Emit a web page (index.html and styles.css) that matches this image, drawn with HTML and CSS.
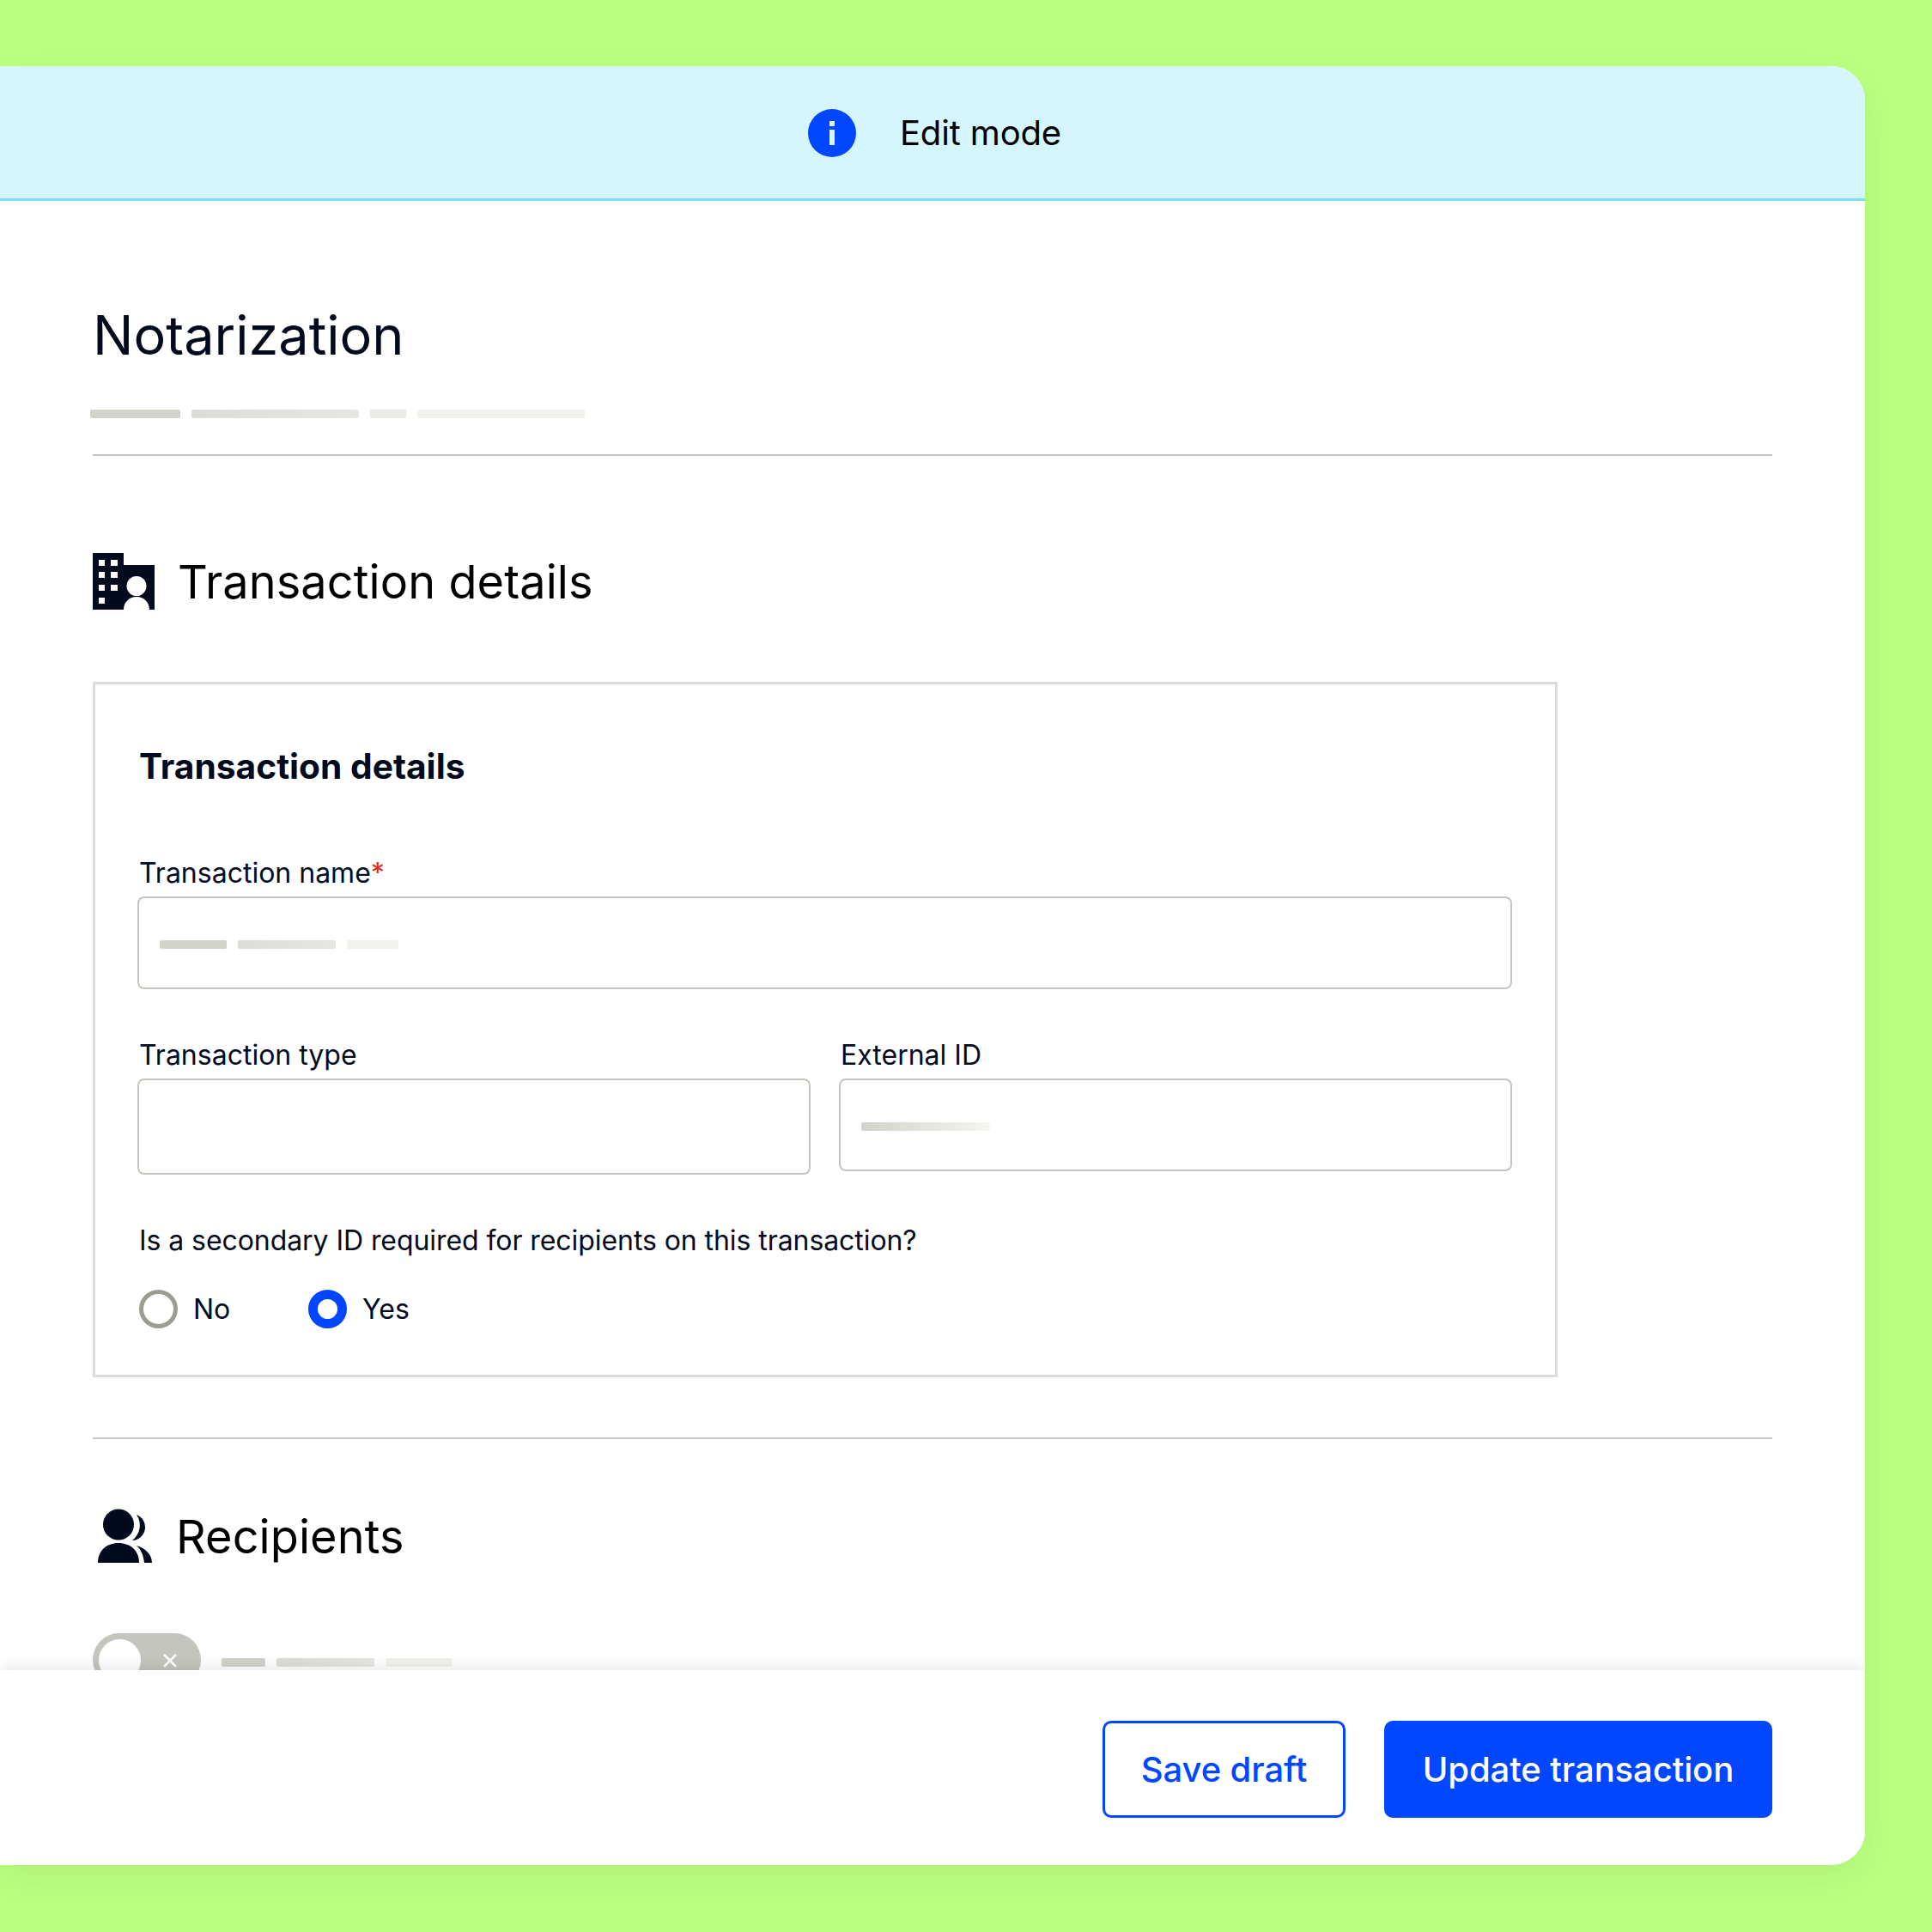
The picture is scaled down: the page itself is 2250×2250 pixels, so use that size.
FILE: index.html
```html
<!DOCTYPE html>
<html lang="en">
<head>
<meta charset="utf-8">
<title>Notarization</title>
<link rel="stylesheet" href="styles.css">
</head>
<body>
<main class="card">
  <div class="banner">
    <svg class="info" viewBox="0 0 56 56"><circle cx="28" cy="28" r="28" fill="#0047ff"/><rect x="25" y="14" width="6" height="6" fill="#d5f5ff"/><rect x="25" y="24" width="6" height="18" fill="#d5f5ff"/></svg>
    <span class="banner-text">Edit mode</span>
  </div>
  <div class="content">
    <h1 class="page-title">Notarization</h1>
    <div class="skel skel-title">
      <i class="s1" style="width:105px"></i><i class="s2" style="width:195px"></i><i class="s3" style="width:42px"></i><i class="s4" style="width:195px"></i>
    </div>
    <hr class="rule rule-top">
    <div class="section-head">
      <svg class="building" viewBox="0 0 72 66"><path fill="#020a1e" d="M0 0H36V14H72V66H66C66 57 59 51 51 51C43 51 36 57 36 66H0Z"/><g fill="#fff"><rect x="7" y="8" width="7" height="7"/><rect x="21" y="8" width="8" height="7"/><rect x="7" y="22" width="7" height="7"/><rect x="21" y="22" width="8" height="7"/><rect x="7" y="37" width="7" height="7"/><rect x="21" y="37" width="8" height="7"/><rect x="7" y="52" width="7" height="7"/><circle cx="51" cy="38.500" r="11.500"/></g></svg>
      <h2 class="section-title">Transaction details</h2>
    </div>
    <section class="box">
      <h3 class="box-title">Transaction details</h3>
      <label class="label label-name">Transaction name<span class="req">*</span></label>
      <div class="input">
        <div class="skel skel-field"><i class="s1" style="width:78px"></i><i class="s2" style="width:114px"></i><i class="s4" style="width:60px"></i></div>
      </div>
      <div class="row">
        <div class="col">
          <label class="label">Transaction type</label>
          <div class="input input-tall"></div>
        </div>
        <div class="col">
          <label class="label">External ID</label>
          <div class="input">
            <div class="skel skel-field"><i class="fade" style="width:150px"></i></div>
          </div>
        </div>
      </div>
      <p class="question">Is a secondary ID required for recipients on this transaction?</p>
      <div class="radios">
        <span class="radio-item radio-no"><span class="radio"></span>No</span>
        <span class="radio-item"><span class="radio radio-on"></span>Yes</span>
      </div>
    </section>
    <hr class="rule rule-mid">
    <div class="section-head section-head-2">
      <svg class="people" viewBox="0 0 64 64"><g fill="#020a1e"><circle cx="24" cy="18.500" r="18"/><path d="M0 63C0 49 10 40 24 40C38 40 48 49 48 63Z"/><path d="M45 7A15.500 15.500 0 0 1 40 37A22 22 0 0 0 45 7Z"/><path d="M45 43C55 46 63 53 63 63H54C53 55 51 48 45 43Z"/></g></svg>
      <h2 class="section-title">Recipients</h2>
    </div>
    <div class="toggle-row">
      <div class="toggle"><span class="knob"></span><svg class="toggle-x" viewBox="0 0 16 16"><path d="M1 1L15 15M15 1L1 15" stroke="#fff" stroke-width="2.500" fill="none"/></svg></div>
      <div class="skel skel-toggle"><i class="s1" style="width:51px"></i><i class="s2" style="width:114px"></i><i class="s4" style="width:78px"></i></div>
    </div>
  </div>
  <footer class="footer">
    <button class="btn btn-outline">Save draft</button>
    <button class="btn btn-solid">Update transaction</button>
  </footer>
</main>
</body>
</html>
```
FILE: styles.css
```css
* { box-sizing: border-box; }
html, body { margin: 0; padding: 0; }
body {
  width: 2250px;
  height: 2250px;
  background: #baff80;
  padding: 77px 78px 78px 0;
  font-family: Inter, "Liberation Sans", sans-serif;
  color: #020a1e;
  overflow: hidden;
}
.card {
  height: 2095px;
  background: #fff;
  border-radius: 0 40px 40px 0;
  box-shadow: 0 14px 40px rgba(0, 0, 0, 0.06);
  display: flex;
  flex-direction: column;
  overflow: hidden;
}
.banner {
  flex: none;
  height: 157px;
  background: #d5f5ff;
  border-bottom: 3px solid #7adfff;
  display: flex;
  align-items: center;
  justify-content: center;
  gap: 51px;
  padding: 2px 0 0 5px;
}
.info { width: 56px; height: 56px; flex: none; }
.banner-text { font-size: 40px; line-height: 48px; letter-spacing: -0.15px; color: #000; }
.content {
  flex: 1;
  min-height: 0;
  overflow: hidden;
  padding: 0 108px;
}
.page-title {
  margin: 0;
  padding: 118px 0 0 0;
  font-size: 63px;
  line-height: 76px;
  font-weight: 400;
}
.skel { display: flex; }
.skel i { display: block; height: 10px; border-radius: 2px; }
.s1 { background: #d2d3cd; }
.s2 { background: linear-gradient(90deg, #dcddd8, #e6e7e2); }
.s3 { background: #e9eae5; }
.s4 { background: #f1f2ed; }
.fade { background: linear-gradient(90deg, #d2d3cd, #f5f5f2); }
.skel-title { gap: 13px; margin: 49px 0 0 -3px; }
.rule { border: 0; height: 2px; background: #c4c5be; margin: 0; }
.rule-top { margin-top: 42px; }
.section-head { display: flex; align-items: center; gap: 27px; margin-top: 113px; }
.building { width: 72px; height: 66px; flex: none; margin-bottom: 1px; }
.section-title {
  margin: 0;
  font-size: 54px;
  line-height: 66px;
  font-weight: 400;
  letter-spacing: 0.1px;
  color: #000;
}
.box {
  width: 1706px;
  height: 810px;
  margin-top: 83px;
  border: 3px solid #dcdcd8;
  padding: 72px 50px 0 49px;
}
.box-title {
  margin: 0;
  padding-left: 2px;
  font-size: 40.700px;
  line-height: 48px;
  font-weight: 700;
}
.label {
  display: block;
  padding-left: 2px;
  font-size: 32px;
  line-height: 38px;
  height: 46px;
}
.label-name { margin-top: 81px; }
.req { color: #d92d20; }
.input {
  height: 108px;
  border: 2px solid #c4c5be;
  border-radius: 8px;
  display: flex;
  align-items: center;
  padding: 4px 24px 0;
}
.input-tall { height: 112px; }
.skel-field { gap: 13px; }
.row { display: flex; gap: 33px; margin-top: 58px; }
.col { flex: 1; min-width: 0; }
.question {
  margin: 58px 0 0;
  padding-left: 2px;
  font-size: 32px;
  line-height: 38px;
  letter-spacing: -0.07px;
}
.radios { display: flex; align-items: center; margin-top: 38px; padding-left: 2px; }
.radio-item { display: flex; align-items: center; gap: 18px; font-size: 32px; line-height: 45px; }
.radio-no { width: 197px; }
.radio { width: 45px; height: 45px; border-radius: 50%; border: 5px solid #9b9c94; display: block; flex: none; }
.radio-on { border: 11px solid #0047ff; }
.rule-mid { margin-top: 70px; background: #c9cac4; }
.section-head-2 { gap: 27px; margin-top: 81px; padding-left: 6px; }
.people { width: 64px; height: 64px; flex: none; margin-bottom: 2px; }
.toggle-row { display: flex; align-items: flex-start; gap: 24px; margin-top: 79px; }
.toggle {
  width: 126px;
  height: 62px;
  border-radius: 31px;
  background: #c4c5be;
  position: relative;
  flex: none;
}
.knob { position: absolute; left: 7px; top: 7px; width: 49px; height: 49px; border-radius: 50%; background: #fff; }
.toggle-x { position: absolute; left: 82px; top: 24px; width: 16px; height: 16px; }
.skel-toggle { gap: 13px; margin-top: 29px; }
.footer {
  flex: none;
  height: 227px;
  background: #fff;
  box-shadow: 0 -3px 16px rgba(0, 0, 0, 0.1);
  position: relative;
  display: flex;
  justify-content: flex-end;
  gap: 45px;
  padding: 59px 108px 0 0;
}
.btn {
  height: 113px;
  border-radius: 10px;
  font-family: inherit;
  font-size: 40px;
  font-weight: 450;
  letter-spacing: -0.1px;
  padding: 0;
  cursor: pointer;
}
.btn-outline { width: 283px; background: #fff; border: 3px solid #0047ff; color: #0047ff; }
.btn-solid { width: 452px; background: #0047ff; border: 0; color: #fff; }
```
